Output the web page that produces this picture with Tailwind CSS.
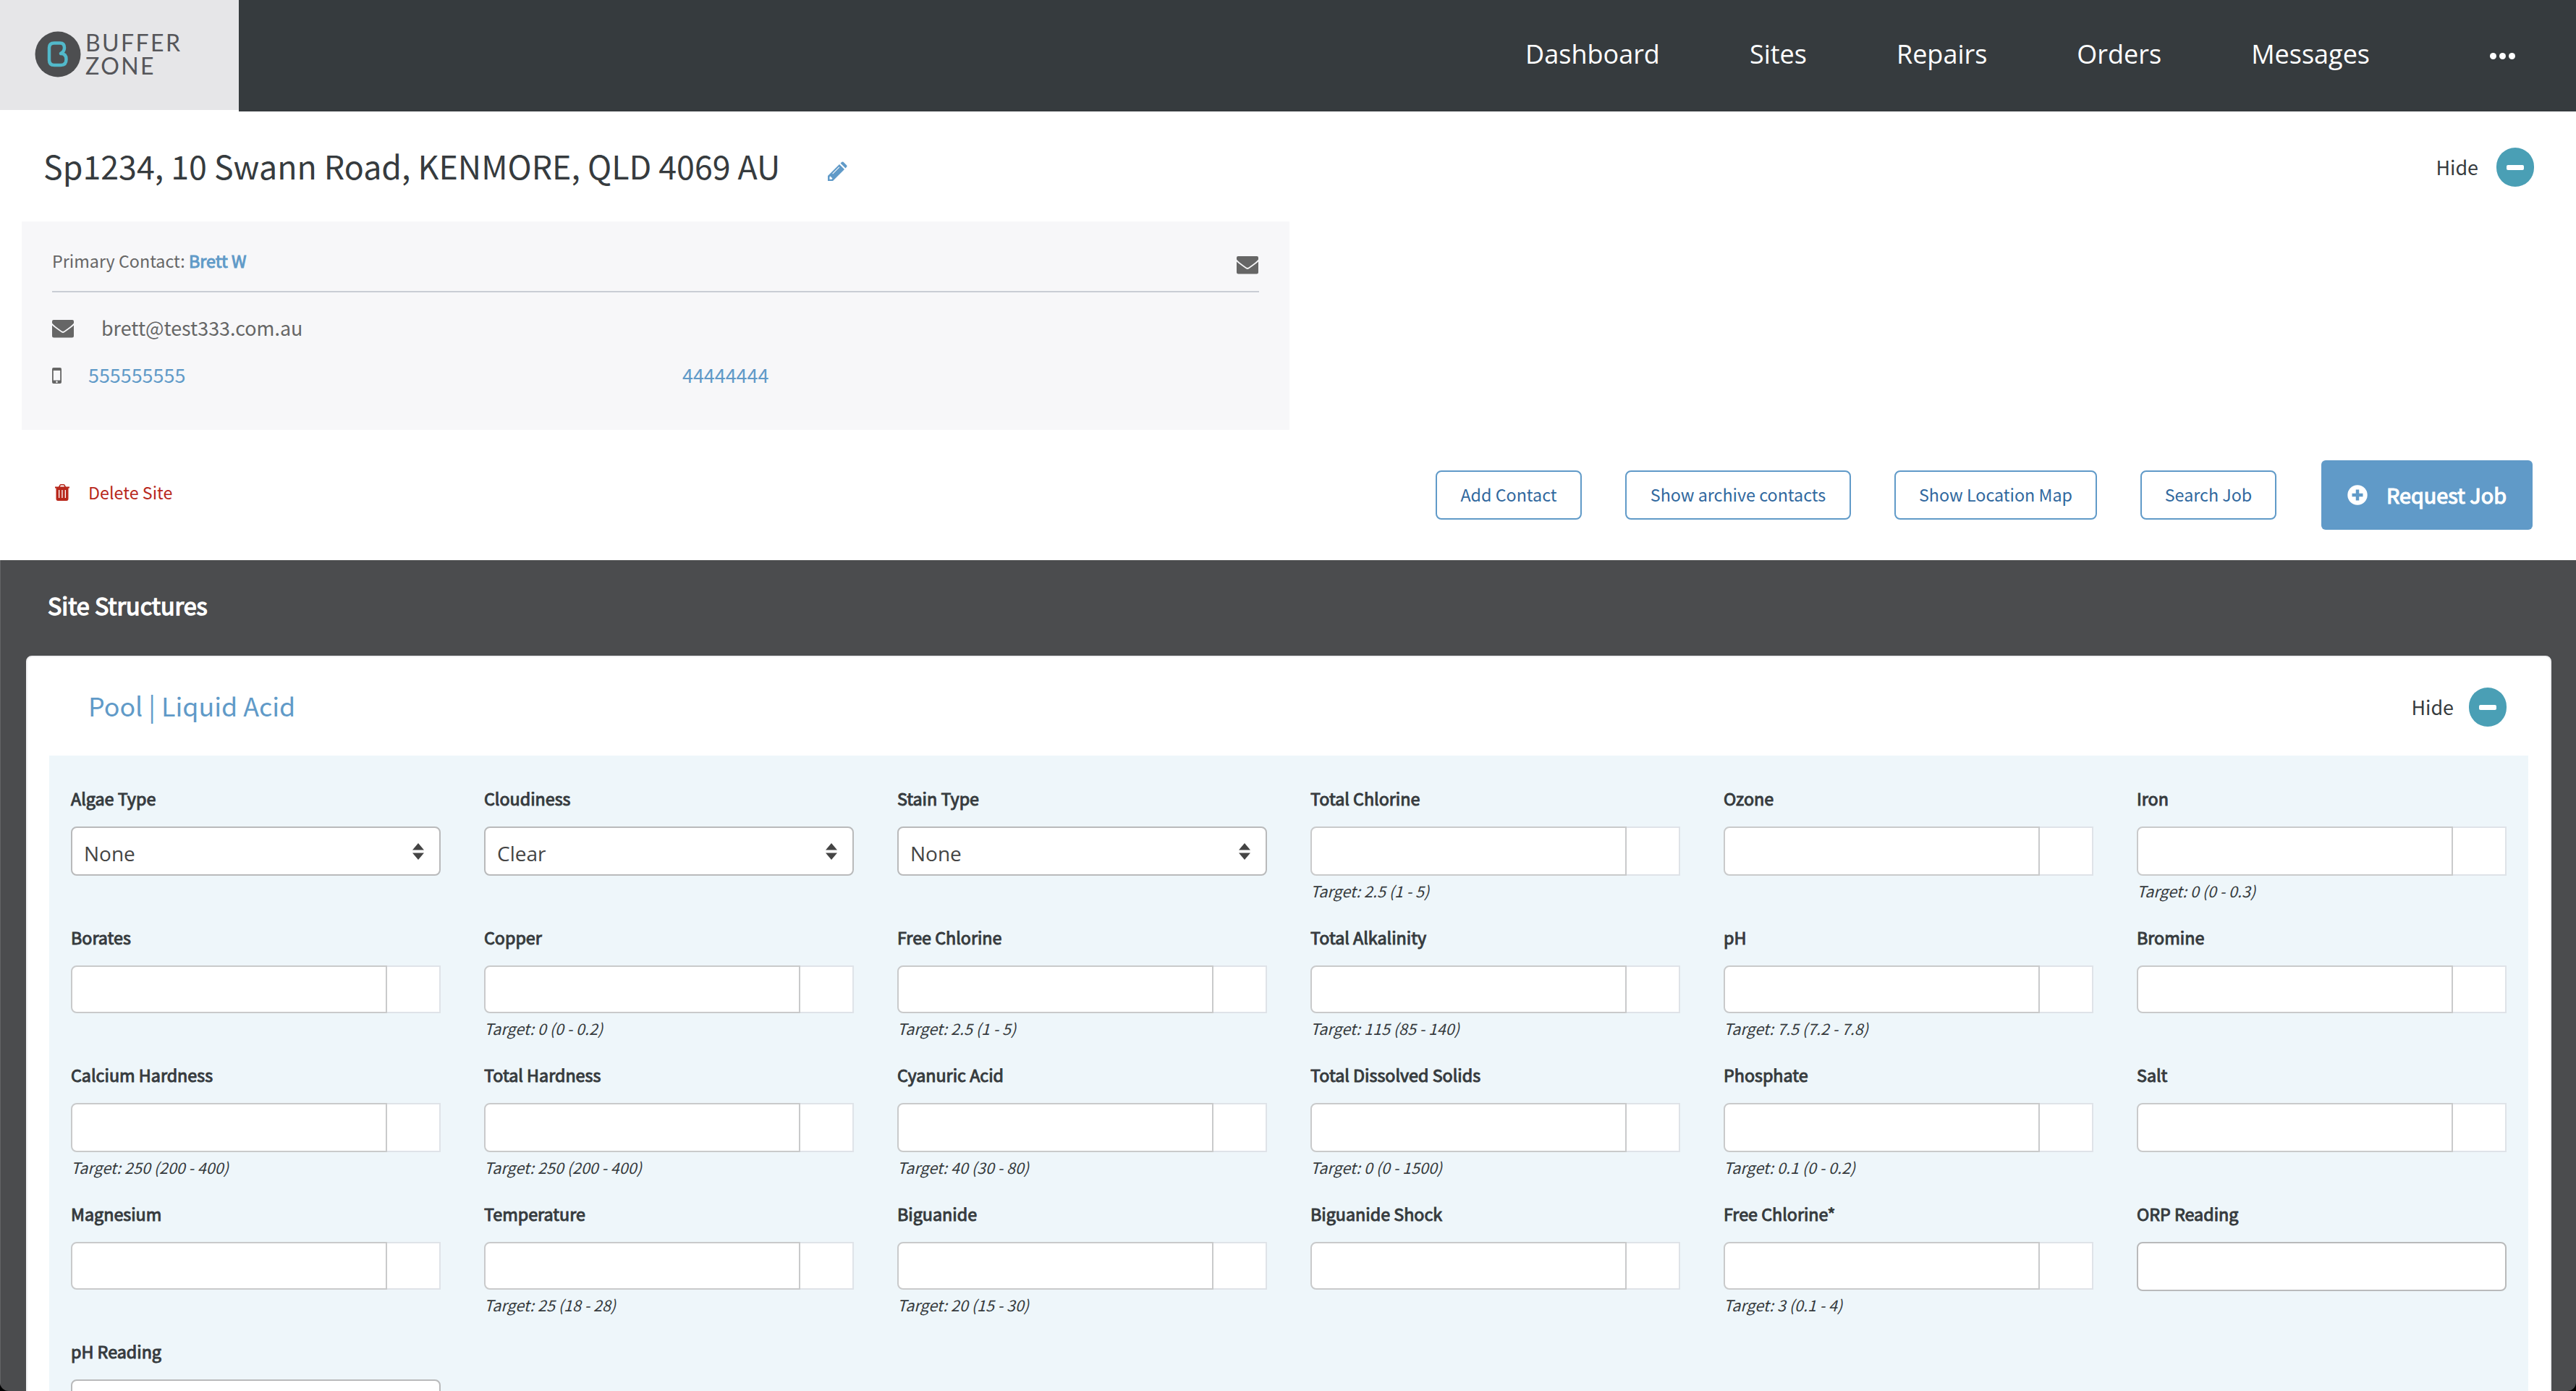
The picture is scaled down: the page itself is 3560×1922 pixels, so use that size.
<!DOCTYPE html>
<html lang="en">
<head>
    <meta charset="UTF-8">
    <meta name="viewport" content="width=device-width, initial-scale=1.0">
    <title>Site - Buffer Zone</title>
    <script src="https://cdn.jsdelivr.net/npm/@tailwindcss/browser@4"></script>
</head>
<body class="bg-black w-[3560px] h-[1922px] overflow-hidden font-['Noto_Sans_CJK_SC','Open_Sans',sans-serif] text-[#363b3e]">
<div class="h-full overflow-hidden rounded-b-[12px] bg-[#4b4c4e] flex flex-col">
    <nav class="h-[154px] shrink-0 flex bg-white">
        <a href="#" class="w-[330px] h-[152px] bg-[#e6e6e8] flex items-start pl-[48px] pt-[43px]">
            <svg class="w-[64px] h-[64px]" viewBox="0 0 64 64" fill="none">
                <circle cx="32" cy="32" r="31.5" fill="#4d4e50"/>
                <path d="M36 31 Q41 28 41 23 Q41 16.500 35 16.500 L27 16.500 Q20 16.500 20 23 L20 40 Q20 47 27 47 L36 47 Q43.500 47 43.500 39 Q43.500 31 36 31" stroke="#52b9ca" stroke-width="4.500" stroke-linecap="round" stroke-linejoin="round"/>
            </svg>
            <span class="ml-[6px] font-['Lato',sans-serif] text-[32px] leading-[32px] tracking-[2.400px] text-[#55565a]">BUFFER<br>ZONE</span>
        </a>
        <div class="flex-1 bg-[#363b3e] flex items-start justify-end gap-[124px] pt-[50px] pr-[84px] text-white font-['Open_Sans',sans-serif] text-[36px] leading-[50px]">
            <a href="#">Dashboard</a>
            <a href="#">Sites</a>
            <a href="#">Repairs</a>
            <a href="#">Orders</a>
            <a href="#">Messages</a>
            <button class="ml-[42px] mt-[23px] flex gap-[4px]">
                <span class="size-[9px] rounded-full bg-white"></span>
                <span class="size-[9px] rounded-full bg-white"></span>
                <span class="size-[9px] rounded-full bg-white"></span>
            </button>
        </div>
    </nav>

    <section class="h-[620px] shrink-0 bg-white pl-[30px] pr-[58px]">
        <div class="h-[152px] flex items-center pl-[30px] pt-[2px]">
            <h1 class="mb-[4px] text-[44.750px] leading-[60px]">Sp1234, 10 Swann Road, KENMORE, QLD 4069 AU</h1>
            <svg class="ml-[65px] mt-[11px] size-[28px]" viewBox="0 0 28 28" fill="#609ac8">
                <path d="M1 20 L17 4 L24 11 L8 27 H1 Z M18.500 2.500 L20.500 0.800 Q21.500 0 22.500 0.800 L27.200 5.500 Q28 6.500 27.200 7.500 L25.500 9.500 Z"/>
                <path d="M4.500 20.500 L7.500 23.500 L6.500 24.700 H3.500 V21.500 Z M16.500 7.500 L17.200 8.200 L8 17.500 L7.300 16.800 Z" fill="#fff"/>
            </svg>
            <span class="ml-auto text-[26.900px]">Hide</span>
            <button class="ml-[25px] w-[52px] h-[54px] rounded-full bg-[#4a9fb5] flex items-center justify-center"><span class="w-[24px] h-[7px] rounded-[2px] bg-white"></span></button>
        </div>
        <div class="w-[1752px] h-[288px] bg-[#f7f7f9] px-[42px] text-[#666]">
            <div class="h-[98px] border-b-2 border-[#c9cdd5] flex justify-between items-start">
                <p class="mt-[36px] text-[23.300px] leading-[36px]">Primary Contact: <a href="#" class="text-[#609ac8] [-webkit-text-stroke:1px_#609ac8]">Brett W</a></p>
                <svg class="mt-[48px] mr-px w-[30px] h-[25px]" viewBox="0 0 30 25" fill="#666"><path d="M2 0 H28 Q30 0 30 2 V4.500 Q28 7.500 16.500 15.500 Q15 16.300 13.500 15.500 Q2 7.500 0 4.500 V2 Q0 0 2 0 Z M0 7.500 Q4 11 13 17.300 Q15 18.500 17 17.300 Q26 11 30 7.500 V22 Q30 24.500 27.500 24.500 H2.500 Q0 24.500 0 22 Z"/></svg>
            </div>
            <div class="mt-[30px] h-[40px] flex items-center text-[26.900px]">
                <svg class="mr-[38px] w-[30px] h-[25px]" viewBox="0 0 30 25" fill="#666"><path d="M2 0 H28 Q30 0 30 2 V4.500 Q28 7.500 16.500 15.500 Q15 16.300 13.500 15.500 Q2 7.500 0 4.500 V2 Q0 0 2 0 Z M0 7.500 Q4 11 13 17.300 Q15 18.500 17 17.300 Q26 11 30 7.500 V22 Q30 24.500 27.500 24.500 H2.500 Q0 24.500 0 22 Z"/></svg>
                <span class="mb-[2px]">brett@test333.com.au</span>
            </div>
            <div class="mt-[25px] h-[40px] flex items-center text-[26.900px] text-[#609ac8]">
                <svg class="w-[13px] h-[22px]" viewBox="0 0 13 22"><path fill="#666" fill-rule="evenodd" d="M2 0 H11 Q13 0 13 2 V20 Q13 22 11 22 H2 Q0 22 0 20 V2 Q0 0 2 0 Z M1.800 4 V17.500 H11.200 V4 Z"/><circle cx="6.500" cy="19.700" r="1.200" fill="#fff"/></svg>
                <a href="#" class="ml-[37px] mb-[2px] w-[821px]">555555555</a>
                <a href="#" class="mb-[2px]">44444444</a>
            </div>
        </div>
        <div class="mt-[42px] pr-[2px] h-[96px] flex items-center text-[23.300px]">
            <a href="#" class="ml-[46px] mb-[7px] flex items-center text-[#b8281c]">
                <svg class="w-[20px] h-[23px]" viewBox="0 0 20 23"><path fill="#b8281c" fill-rule="evenodd" d="M0 3.500 H5 L6.500 0.800 Q7 0 8 0 H12 Q13 0 13.500 0.800 L15 3.500 H20 V5.500 H18.500 V20 Q18.500 23 16 23 H4 Q1.500 23 1.500 20 V5.500 H0 Z M7 3.500 H13 L12.200 1.600 H7.800 Z M5 8 V19 H6.300 V8 Z M9.300 8 V19 H10.600 V8 Z M13.700 8 V19 H15 V8 Z"/></svg>
                <span class="ml-[26px]">Delete Site</span>
            </a>
            <div class="ml-auto flex items-center gap-[60px] text-[#30689e]">
                <button class="w-[202px] h-[68px] pb-[2px] border-2 border-[#609ac8] rounded-[8px]">Add Contact</button>
                <button class="w-[312px] h-[68px] pb-[2px] border-2 border-[#609ac8] rounded-[8px]">Show archive contacts</button>
                <button class="w-[280px] h-[68px] pb-[2px] border-2 border-[#609ac8] rounded-[8px]">Show Location Map</button>
                <button class="w-[188px] h-[68px] pb-[2px] border-2 border-[#609ac8] rounded-[8px]">Search Job</button>
                <button class="ml-[2px] w-[292px] h-[96px] bg-[#609ac8] rounded-[6px] text-white text-[28.800px] flex items-center pl-[36px]">
                    <svg class="size-[28px]" viewBox="0 0 28 28"><circle cx="14" cy="14" r="13.700" fill="#fff"/><path d="M14 6.500 V21.500 M6.500 14 H21.500" stroke="#609ac8" stroke-width="4.500"/></svg>
                    <span class="ml-[26px] [-webkit-text-stroke:1.200px_#fff]">Request Job</span>
                </button>
            </div>
        </div>
    </section>

    <section class="flex-1 border-l border-[#626365] pl-[35px] pr-[34px]">
        <h2 class="h-[132px] pl-[30px] pt-[34px] text-[32.300px] leading-[56px] text-white [-webkit-text-stroke:1.400px_#fff]">Site Structures</h2>
        <div class="h-[1100px] bg-white border-2 border-[#f0f0f2] rounded-[8px] px-[30px]">
            <div class="h-[136px] flex items-center pt-[2px] pl-[54px] pr-[30px]">
                <h3 class="mb-[4px] text-[35.800px] text-[#609ac8]">Pool | Liquid Acid</h3>
                <span class="ml-auto text-[26.900px]">Hide</span>
                <button class="ml-[21px] w-[52px] h-[54px] rounded-full bg-[#4a9fb5] flex items-center justify-center"><span class="w-[24px] h-[7px] rounded-[2px] bg-white"></span></button>
            </div>
            <div id="readings" class="h-[950px] bg-[#eef6fa] px-[30px] pt-[38px] grid grid-cols-[repeat(6,511px)] grid-rows-[192px_190px_192px_190px_190px] content-start gap-x-[60px]"></div>
        </div>
    </section>
</div>

<script>
    const fields = [
        { label: 'Algae Type', type: 'select', value: 'None' },
        { label: 'Cloudiness', type: 'select', value: 'Clear' },
        { label: 'Stain Type', type: 'select', value: 'None' },
        { label: 'Total Chlorine', target: '2.5 (1 - 5)' },
        { label: 'Ozone' },
        { label: 'Iron', target: '0 (0 - 0.3)' },
        { label: 'Borates' },
        { label: 'Copper', target: '0 (0 - 0.2)' },
        { label: 'Free Chlorine', target: '2.5 (1 - 5)' },
        { label: 'Total Alkalinity', target: '115 (85 - 140)' },
        { label: 'pH', target: '7.5 (7.2 - 7.8)' },
        { label: 'Bromine' },
        { label: 'Calcium Hardness', target: '250 (200 - 400)' },
        { label: 'Total Hardness', target: '250 (200 - 400)' },
        { label: 'Cyanuric Acid', target: '40 (30 - 80)' },
        { label: 'Total Dissolved Solids', target: '0 (0 - 1500)' },
        { label: 'Phosphate', target: '0.1 (0 - 0.2)' },
        { label: 'Salt' },
        { label: 'Magnesium' },
        { label: 'Temperature', target: '25 (18 - 28)' },
        { label: 'Biguanide', target: '20 (15 - 30)' },
        { label: 'Biguanide Shock' },
        { label: 'Free Chlorine*', target: '3 (0.1 - 4)' },
        { label: 'ORP Reading', type: 'text' },
        { label: 'pH Reading', type: 'text' }
    ];

    const controls = {
        select: f => `<div class="h-[68px] bg-white border-2 border-[#b9babb] rounded-[8px] flex items-center justify-between pl-[16px] pr-[21px] font-['Open_Sans',sans-serif] text-[28px] text-[#444]">
                <span class="pt-[5px]">${f.value}</span>
                <svg class="w-[16px] h-[23px]" viewBox="0 0 16 23" fill="#444"><path d="M8 0 L16 9.500 H0 Z M8 23 L16 13.500 H0 Z"/></svg>
            </div>`,
        text: () => `<div class="h-[68px] bg-white border-2 border-[#b9babb] rounded-[8px]"></div>`,
        // odd rows are a pixel pair taller than even ones
        number: (f, i) => `<div class="flex ${Math.floor(i / 6) % 2 ? 'h-[66px]' : 'h-[68px]'}">
                <div class="flex-1 bg-white border-2 border-[#c9cacb] rounded-l-[8px]"></div>
                <div class="w-[74px] bg-white border-2 border-l-0 border-[#dfe3e8]"></div>
            </div>`
    };

    document.getElementById('readings').innerHTML = fields.map((f, i) => `
        <div>
            <label class="block h-[60px] text-[23.300px] leading-[42px] [-webkit-text-stroke:1px_#363b3e]">${f.label}</label>
            ${controls[f.type || 'number'](f, i)}
            ${f.target ? `<p class="pt-[3px] text-[21.500px] leading-[36px] italic">Target: ${f.target}</p>` : ''}
        </div>`).join('');
</script>
</body>
</html>
